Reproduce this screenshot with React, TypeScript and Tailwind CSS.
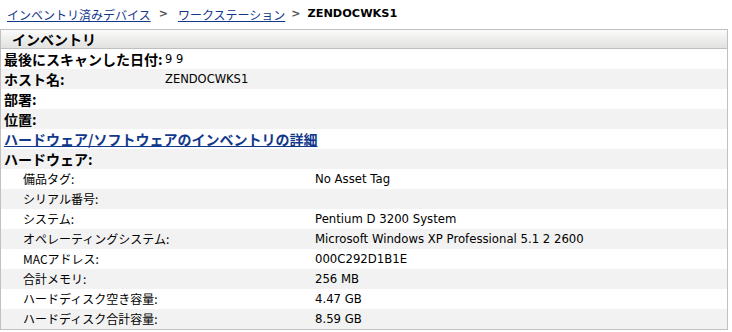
import React from "react";

const cjk = "font-['Noto_Sans_CJK_JP','Noto_Sans',sans-serif]";
const lat = "font-['DejaVu_Sans','Noto_Sans_CJK_JP',sans-serif]";

type Row = { label: string; value?: string; kind: "top" | "link" | "section" | "hw" };

const rows: Row[] = [
  { label: "最後にスキャンした日付:", value: "9 9", kind: "top" },
  { label: "ホスト名:", value: "ZENDOCWKS1", kind: "top" },
  { label: "部署:", kind: "top" },
  { label: "位置:", kind: "top" },
  { label: "ハードウェア/ソフトウェアのインベントリの詳細", kind: "link" },
  { label: "ハードウェア:", kind: "section" },
  { label: "備品タグ:", value: "No Asset Tag", kind: "hw" },
  { label: "シリアル番号:", kind: "hw" },
  { label: "システム:", value: "Pentium D 3200 System", kind: "hw" },
  { label: "オペレーティングシステム:", value: "Microsoft Windows XP Professional 5.1 2 2600", kind: "hw" },
  { label: "MACアドレス:", value: "000C292D1B1E", kind: "hw" },
  { label: "合計メモリ:", value: "256 MB", kind: "hw" },
  { label: "ハードディスク空き容量:", value: "4.47 GB", kind: "hw" },
  { label: "ハードディスク合計容量:", value: "8.59 GB", kind: "hw" },
];

function RowView({ row, idx }: { row: Row; idx: number }) {
  const bg = idx % 2 === 0 ? "bg-white" : "bg-[#f2f2f2]";
  if (row.kind === "link") {
    return (
      <div className={`${bg} h-[20px] flex items-center pl-[3px]`}>
        <a href="#" className={`${cjk} text-[14px] leading-[20px] font-bold text-[#12388c] underline whitespace-nowrap`}>
          {row.label}
        </a>
      </div>
    );
  }
  if (row.kind === "section") {
    return (
      <div className={`${bg} h-[20px] flex items-center pl-[3px]`}>
        <span className={`${cjk} text-[14px] leading-[20px] font-bold text-black whitespace-nowrap`}>{row.label}</span>
      </div>
    );
  }
  if (row.kind === "top") {
    return (
      <div className={`${bg} h-[20px] flex items-center pl-[3px]`}>
        <span className={`${cjk} w-[161px] shrink-0 text-[14px] leading-[20px] font-bold text-black whitespace-nowrap`}>{row.label}</span>
        <span className={`${lat} text-[11.5px] leading-[20px] text-black whitespace-nowrap`}>{row.value ?? ""}</span>
      </div>
    );
  }
  return (
    <div className={`${bg} h-[20px] flex items-center pl-[22px]`}>
      <span className={`${cjk} w-[292px] shrink-0 text-[12px] leading-[20px] text-black whitespace-nowrap`}>{row.label}</span>
      <span className={`${lat} text-[11.7px] leading-[20px] text-black whitespace-nowrap`}>{row.value ?? ""}</span>
    </div>
  );
}

export default function App() {
  return (
    <div className="w-[732px] h-[332px] bg-white overflow-hidden">
      <div className="h-[29px] flex items-center pl-[7px] whitespace-nowrap">
        <a href="#" className={`${cjk} text-[12px] text-[#12388c] underline`}>インベントリ済みデバイス</a>
        <span className={`${lat} text-[11px] font-bold text-[#555] ml-[8px] mr-[10px]`}>&gt;</span>
        <a href="#" className={`${cjk} text-[12px] text-[#12388c] underline`}>ワークステーション</a>
        <span className={`${lat} text-[11px] font-bold text-[#555] ml-[6px] mr-[7px]`}>&gt;</span>
        <span className={`${lat} text-[11.3px] font-bold text-black`}>ZENDOCWKS1</span>
      </div>
      <div className="w-[728px] border border-[#c0c0c0]">
        <div className="h-[19px] flex items-center pl-[11px] bg-gradient-to-b from-[#fbfbfb] to-[#e1e2df] border-b border-[#c0c0c0]">
          <span className={`${cjk} text-[14px] leading-[18px] font-bold text-black`}>インベントリ</span>
        </div>
        {rows.map((r, i) => (
          <RowView key={i} row={r} idx={i} />
        ))}
      </div>
    </div>
  );
}
